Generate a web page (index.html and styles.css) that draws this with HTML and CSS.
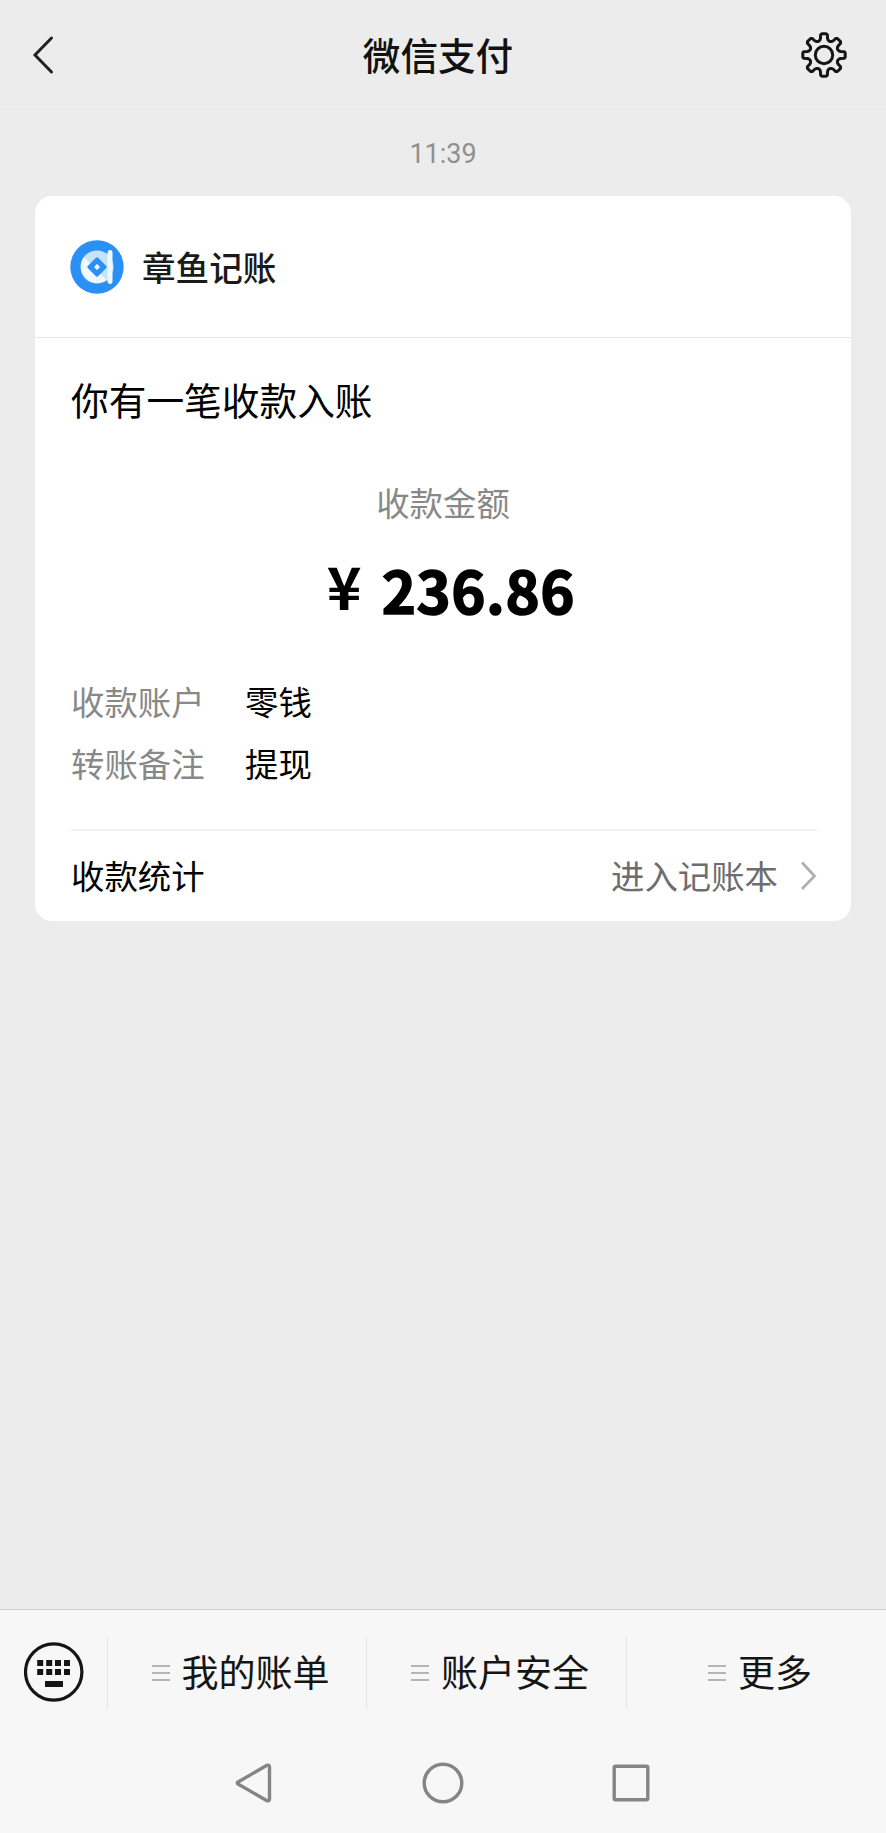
FILE: index.html
```html
<!DOCTYPE html>
<html lang="zh-CN">
<head>
<meta charset="utf-8">
<title>微信支付</title>
<link rel="stylesheet" href="styles.css">
</head>
<body>
<div class="app">
  <header class="topbar">
    <svg class="back" width="24" height="40" viewBox="0 0 24 40"><path d="M19.500 3 3 20l16.500 17"/></svg>
    <h1 class="title">微信支付</h1>
    <svg class="gear" width="48" height="48" viewBox="-24 -24 48 48">
      <circle r="8.700"/>
      <path id="gear-outline" d=""/>
    </svg>
  </header>
  <main class="chat">
    <time class="time">11:39</time>
    <section class="card">
      <div class="brand">
        <svg width="54" height="54" viewBox="0 0 54 54">
          <circle cx="27" cy="27" r="26.700" fill="#2b90f5"/>
          <circle cx="27" cy="27" r="16.500" fill="#c6e3fd"/>
          <path d="M14 17a16.500 16.500 0 0 0 23 23l-9-8z" fill="#eff8ff"/>
          <path d="M37.500 13q0-3 2.500-3t2.500 3v28q0 3-2.500 3t-2.500-3z" fill="#eff8ff"/>
          <rect x="19.700" y="19.700" width="14.600" height="14.600" rx="1.500" transform="rotate(45 27 27)" fill="#2b90f5"/>
          <rect x="24.800" y="24.800" width="4.400" height="4.400" rx=".5" transform="rotate(45 27 27)" fill="#eff8ff"/>
        </svg>
        <span class="brand-name">章鱼记账</span>
      </div>
      <div class="body">
        <h2 class="headline">你有一笔收款入账</h2>
        <div class="amount-label">收款金额</div>
        <div class="amount"><span class="yen">¥</span><span class="digits">236.86</span></div>
        <dl class="details">
          <dt>收款账户</dt><dd>零钱</dd>
          <dt>转账备注</dt><dd>提现</dd>
        </dl>
        <div class="stats">
          <span>收款统计</span>
          <span class="link">进入记账本</span>
          <svg class="chevron" width="18" height="32" viewBox="0 0 18 32"><path d="M3 3.500 15.500 17 3 30"/></svg>
        </div>
      </div>
    </section>
  </main>
  <footer class="bottom">
    <nav class="menu">
      <div class="keyboard">
        <svg width="60" height="60" viewBox="0 0 60 60">
          <circle cx="29.700" cy="30" r="28.200" fill="none" stroke="#151515" stroke-width="3.200"/>
          <path fill="#151515" d="M13.200 18h6v6h-6zM22.200 18h6v6h-6zM31 18h6v6h-6zM40 18h6v6h-6zM13.200 27h6v6h-6zM22.200 27h6v6h-6zM31 27h6v6h-6zM40 27h6v6h-6zM21 39h18v6h-18z"/>
        </svg>
      </div>
      <div class="item"><i class="lines"></i>我的账单</div>
      <div class="item"><i class="lines"></i>账户安全</div>
      <div class="item"><i class="lines"></i>更多</div>
    </nav>
    <div class="system">
      <svg width="40" height="44" viewBox="0 0 40 44"><path d="M4 21 33 4.300Q35.500 3.500 35.500 6V38Q35.500 40.500 33 39.700L4 23Q2.500 22 4 21z"/></svg>
      <svg width="44" height="44" viewBox="0 0 44 44"><circle cx="22" cy="22" r="18.800"/></svg>
      <svg width="40" height="44" viewBox="0 0 40 44"><rect x="2.200" y="5.200" width="33.600" height="33.600" rx="1.500"/></svg>
    </div>
  </footer>
</div>
<script src="gear.js"></script>
</body>
</html>
```
FILE: gear.js
```js
// Outline of the eight-toothed settings gear: [radius, angle offset] along one tooth.
const tooth = [[14.8, -20], [15.6, -15], [17, -12], [20.4, -9.5], [21.3, -6], [21.3, 6], [20.4, 9.5], [17, 12], [15.6, 15], [14.8, 20]];
const points = [];
for (let i = 0; i < 8; i++) {
  for (const [r, a] of tooth) {
    const t = (i * 45 + a) * Math.PI / 180;
    points.push((r * Math.cos(t)).toFixed(2) + ' ' + (r * Math.sin(t)).toFixed(2));
  }
}
document.getElementById('gear-outline').setAttribute('d', 'M' + points.join('L') + 'Z');
```
FILE: styles.css
```css
* { box-sizing: border-box; }
body {
  margin: 0;
  background: #ececec;
  color: #000;
  font-family: "Noto Sans CJK SC", sans-serif;
}
h1, h2, dl, dd { margin: 0; font-weight: 400; }
svg { display: block; flex: none; }

.app { display: flex; flex-direction: column; height: 1833px; }

.topbar {
  display: flex;
  align-items: center;
  justify-content: space-between;
  height: 110px;
  padding: 0 38px 0 32px;
  border-bottom: 1px solid #e6e6e6;
}
.back { margin-right: 20px; }
.back path { fill: none; stroke: #222; stroke-width: 3; stroke-linecap: round; }
.gear { fill: none; stroke: #151515; stroke-width: 3; stroke-linejoin: round; }
.title {
  font-size: 37.6px;
  line-height: 50px;
  font-weight: 500;
  color: #111;
  padding-bottom: 2px;
}

.chat { flex: 1; padding: 0 35px; }
.time {
  display: block;
  height: 86px;
  line-height: 88px;
  text-align: center;
  font-family: Roboto, sans-serif;
  font-size: 27px;
  color: #909090;
}

.card { height: 725px; background: #fff; border-radius: 17px; }
.brand {
  display: flex;
  align-items: center;
  gap: 18px;
  height: 142px;
  padding: 0 35px;
  border-bottom: 1px solid #e6e6e6;
}
.brand-name { font-size: 33.6px; line-height: 50px; font-weight: 500; color: #1a1a1a; }
.body { padding: 36px 34px 0 36px; }
.headline { font-size: 37.7px; line-height: 50px; }
.amount-label {
  margin-top: 53px;
  padding-right: 2px;
  font-size: 33.4px;
  line-height: 50px;
  text-align: center;
  color: #888;
}
.amount {
  display: flex;
  justify-content: center;
  gap: 20px;
  height: 80px;
  margin-top: 22px;
  padding-left: 14px;
  font-size: 59px;
  line-height: 80px;
  font-weight: 700;
}
.yen { margin-top: -4px; }
.digits {
  font-size: 58px;
  letter-spacing: .6px;
  -webkit-text-stroke: 1.6px #000;
}
.details {
  display: grid;
  grid-template-columns: 174px 1fr;
  grid-auto-rows: 62px;
  margin-top: 41px;
  height: 161px;
  font-size: 33.4px;
  line-height: 62px;
  border-bottom: 2px solid #f3f3f3;
}
.details dt { color: #888; }
.stats {
  display: flex;
  align-items: center;
  height: 87px;
  font-size: 33.4px;
}
.link { margin-left: auto; color: #6d6d6d; }
.chevron { margin-left: 21px; }
.chevron path { fill: none; stroke: #b0b0b0; stroke-width: 2.8; }

.bottom { height: 224px; background: #f7f7f7; border-top: 1px solid #cfcfcf; }
.menu {
  display: grid;
  grid-template-columns: 107px 259px 260px 260px;
  height: 124px;
  padding: 27px 0 26px;
}
.keyboard { padding: 5px 0 0 24px; }
.item {
  display: flex;
  align-items: center;
  justify-content: center;
  gap: 12px;
  padding: 0 0 3px 7px;
  font-size: 37px;
  line-height: 50px;
  color: #151515;
  border-left: 1px solid #e4e4e4;
}
.lines {
  width: 18px;
  height: 17px;
  margin-top: 5px;
  background: linear-gradient(#b5b5b5 0 2px, transparent 2px 7px, #b5b5b5 7px 9px, transparent 9px 14px, #b5b5b5 14px 16px, transparent 16px);
}
.system {
  display: flex;
  justify-content: center;
  gap: 147px;
  padding-top: 27px;
}
.system svg { fill: none; stroke: #858585; stroke-width: 3.4; stroke-linejoin: round; }
```
